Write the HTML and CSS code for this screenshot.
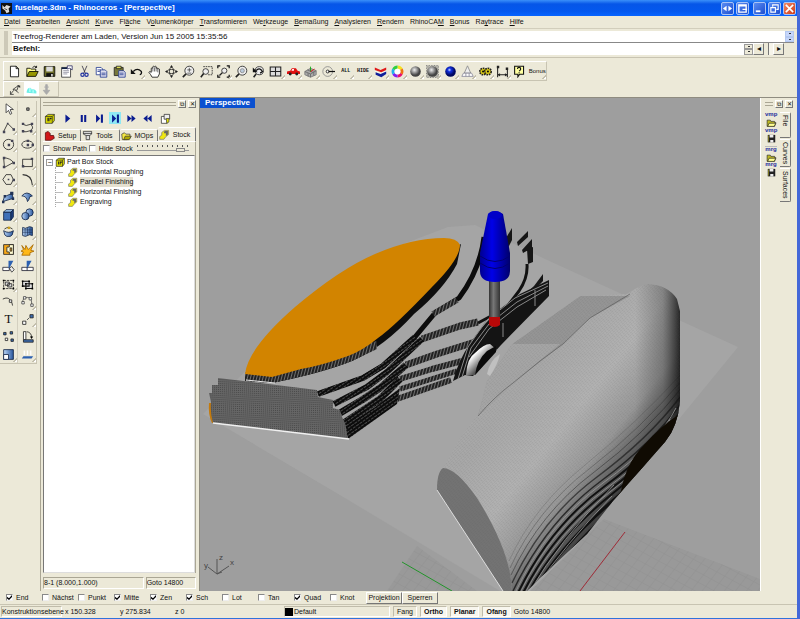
FILE: index.html
```html
<!DOCTYPE html>
<html lang="de">
<head>
    <meta charset="UTF-8">
    <meta name="viewport" content="width=device-width, initial-scale=1.0">
    <title>fuselage.3dm - Rhinoceros - [Perspective]</title>
    <link rel="stylesheet" href="styles.css">
</head>
<body>
<!-- icon set -->
<svg class="defs" aria-hidden="true">
    <defs>
        <radialGradient id="gball" cx="40%" cy="35%"><stop offset="0" stop-color="#eee"/><stop offset=".5" stop-color="#999"/><stop offset="1" stop-color="#444"/></radialGradient>
        <radialGradient id="bball" cx="40%" cy="35%"><stop offset="0" stop-color="#cdf"/><stop offset=".35" stop-color="#1230e0"/><stop offset="1" stop-color="#000860"/></radialGradient>
        <linearGradient id="bl"><stop offset="0" stop-color="#bcd8f8"/><stop offset="1" stop-color="#28559c"/></linearGradient>
        <pattern id="check" width="2" height="2" patternUnits="userSpaceOnUse"><path d="M0 0h1v1H0zM1 1h1v1H1z" fill="#777"/></pattern>
    </defs>
    <symbol id="i-new" viewBox="0 0 16 16"><path d="M3 1.500h7l3 3v10H3zM10 1.500v3h3" fill="#fff" stroke="#000"/></symbol>
    <symbol id="i-open" viewBox="0 0 16 16"><path d="M1 14V4h4l1 1h6v3" fill="#ffff90" stroke="#000"/><path d="M1 14l3-6h11l-3 6z" fill="#969600" stroke="#000"/><path d="M8 3q3-3 5 0v-2m0 2h-2" fill="none" stroke="#000"/></symbol>
    <symbol id="i-save" viewBox="0 0 16 16"><path d="M1.500 2h13v12h-13z" fill="#6d6d28" stroke="#000"/><path d="M4 2h8v6H4z" fill="#ddd"/><path d="M4 10h9v4H4z" fill="#111"/><path d="M10 11h2v3h-2z" fill="#ddd"/></symbol>
    <symbol id="i-props" viewBox="0 0 16 16"><path d="M2 3h11v12H2z" fill="#fff" stroke="#333"/><path d="M2 3h7v2H2z" fill="#124"/><path d="M4 7h7M4 9h7M4 11h5" stroke="#889"/><path d="M9 1h6v5l-3-2-3 1z" fill="#fff" stroke="#336"/></symbol>
    <symbol id="i-cut" viewBox="0 0 16 16"><path d="M5 1l4 9M11 1L7 10" stroke="#334" fill="none"/><circle cx="5.500" cy="12" r="2" fill="none" stroke="#2233a0" stroke-width="1.500"/><circle cx="10.500" cy="12" r="2" fill="none" stroke="#2233a0" stroke-width="1.500"/></symbol>
    <symbol id="i-copy" viewBox="0 0 16 16"><path d="M1.500 3h6l2 2v7h-8z" fill="#fff" stroke="#223a90"/><path d="M6.500 6h6l2 2v7h-8z" fill="#dde" stroke="#223a90"/><path d="M3 6h4M3 8h3M8 10h5M8 12h5" stroke="#223a90"/></symbol>
    <symbol id="i-paste" viewBox="0 0 16 16"><path d="M1.500 3h11v10h-11z" fill="#77773a" stroke="#222"/><path d="M4 1.500h6v3H4z" fill="#dd5" stroke="#222"/><path d="M7 7h6l2 2v6H7z" fill="#dde" stroke="#223a90"/><path d="M8 10h5M8 12h5" stroke="#223a90"/></symbol>
    <symbol id="i-undo" viewBox="0 0 16 16"><path d="M4 8q5-5 10 0 1 3-2 4" fill="none" stroke="#111" stroke-width="1.500"/><path d="M1 5v6h6z" fill="#111"/></symbol>
    <symbol id="i-pan" viewBox="0 0 16 16"><path d="M5 15Q3 11 1 9q1-2 3 0V4q1-1 2 0V2q1-1 2 0v0q1-1 2 0v2q1-1 2 0v1q1-1 2 0v6l-2 4z" fill="#fff" stroke="#111"/><path d="M6 4v4M8 3v5M10 3v5M12 5v4" stroke="#333" stroke-width=".8"/></symbol>
    <symbol id="i-rotv" viewBox="0 0 16 16"><ellipse cx="8" cy="8" rx="5" ry="2.500" fill="none" stroke="#222"/><ellipse cx="8" cy="8" rx="2.500" ry="5" fill="none" stroke="#222"/><path d="M8 0l2 3H6zM8 16l2-3H6zM0 8l3-2v4zM16 8l-3-2v4z" fill="#222"/></symbol>
    <symbol id="i-zoom" viewBox="0 0 16 16"><circle cx="9" cy="7" r="5.500" fill="#eee" stroke="#222"/><path d="M5 11l-4 4" stroke="#222" stroke-width="2"/><path d="M6.500 6h5M9 3.500v5M6.500 10h5" stroke="#222" stroke-width=".8"/></symbol>
    <symbol id="i-zoomw" viewBox="0 0 16 16"><path d="M4 2h11v10H9" fill="none" stroke="#222" stroke-dasharray="2 1"/><circle cx="7" cy="8" r="3.500" fill="#eee" stroke="#222"/><path d="M4.500 10.500L1 15" stroke="#222" stroke-width="2"/></symbol>
    <symbol id="i-zoome" viewBox="0 0 16 16"><path d="M1 4V1h3M12 1h3v3M15 12v3h-3M4 15H1v-3" fill="none" stroke="#111" stroke-width="1.500"/><circle cx="9" cy="7" r="3.200" fill="#eee" stroke="#222"/><path d="M6.500 9.500L3 13" stroke="#222" stroke-width="1.600"/></symbol>
    <symbol id="i-zooms" viewBox="0 0 16 16"><circle cx="9" cy="7" r="5.500" fill="#eee" stroke="#222"/><path d="M5 11l-4 4" stroke="#222" stroke-width="2"/><circle cx="9" cy="7" r="2.500" fill="#bcd" stroke="#888"/></symbol>
    <symbol id="i-zoomu" viewBox="0 0 16 16"><circle cx="9" cy="7" r="5" fill="#eee" stroke="#222"/><path d="M5 11l-3 4" stroke="#222" stroke-width="2"/><path d="M5 7q4-5 8 1l-3 2" fill="none" stroke="#111" stroke-width="1.500"/><path d="M1 3v6h6z" fill="#111"/></symbol>
    <symbol id="i-four" viewBox="0 0 16 16"><path d="M1.500 2.500h13v11h-13zM8 2.500v11M1.500 8h13" fill="#ddd" stroke="#222" stroke-width="1.300"/></symbol>
    <symbol id="i-car" viewBox="0 0 16 16"><path d="M0 11V8l4-1 2-3h5l2 3 3 1v3z" fill="#e01010"/><path d="M6.500 5h2v2H5.500z" fill="#fff"/><circle cx="4" cy="11" r="1.800" fill="#222"/><circle cx="12" cy="11" r="1.800" fill="#222"/></symbol>
    <symbol id="i-cplane" viewBox="0 0 16 16"><path d="M1 8l7-4 7 3v5l-7 3-7-3z" fill="#aaa" stroke="#777"/><path d="M1 8l7 3 7-4M8 11v4M4 6l7 3M5 10v4M12 8v5" stroke="#666" fill="none"/><path d="M8 8V2" stroke="#0a0"/><path d="M8 8l5-3" stroke="#d00"/></symbol>
    <symbol id="i-osnap" viewBox="0 0 16 16"><circle cx="7" cy="8" r="6" fill="none" stroke="#888"/><circle cx="7" cy="8" r="1.800" fill="#fff" stroke="#111"/><path d="M8 8h8" stroke="#111" stroke-width="1.500"/></symbol>
    <symbol id="i-layers" viewBox="0 0 16 16"><path d="M1 3l7 3 7-3v3l-6 3-8-3z" fill="#e01818"/><path d="M1 7l7 3 7-3v1l-6 3-8-3z" fill="#fff"/><path d="M2 9l6 2 7-3v3l-6 4-7-3z" fill="#10209a"/></symbol>
    <symbol id="i-wheel" viewBox="0 0 16 16"><g fill="none" stroke-width="3.500"><path d="M8 2.500A5.500 5.500 0 0 1 12.800 5.300" stroke="#f5e020"/><path d="M12.800 5.300A5.500 5.500 0 0 1 12.800 10.700" stroke="#f07010"/><path d="M12.800 10.700A5.500 5.500 0 0 1 8 13.500" stroke="#e81070"/><path d="M8 13.500A5.500 5.500 0 0 1 3.200 10.700" stroke="#8020f0"/><path d="M3.200 10.700A5.500 5.500 0 0 1 3.200 5.300" stroke="#20b0f0"/><path d="M3.200 5.300A5.500 5.500 0 0 1 8 2.500" stroke="#30d040"/></g><circle cx="8" cy="8" r="3.500" fill="#fff"/></symbol>
    <symbol id="i-gray" viewBox="0 0 16 16"><circle cx="8" cy="8" r="6.500" fill="url(#gball)"/></symbol>
    <symbol id="i-grayc" viewBox="0 0 16 16"><path d="M0 0h16v16H0z" fill="url(#check)"/><circle cx="8" cy="8" r="6.500" fill="url(#gball)"/></symbol>
    <symbol id="i-blue" viewBox="0 0 16 16"><circle cx="8" cy="8" r="6.500" fill="url(#bball)"/></symbol>
    <symbol id="i-cone" viewBox="0 0 16 16"><path d="M8 1l4 9H4z" fill="#eee" stroke="#888"/><path d="M3 10h10l2 4H1z" fill="#fff" stroke="#889"/><path d="M6 10v4M10 10v4" stroke="#889"/></symbol>
    <symbol id="i-gears" viewBox="0 0 16 16"><circle cx="5" cy="8" r="4" fill="#d8c818" stroke="#222" stroke-width="2" stroke-dasharray="2 1"/><circle cx="11" cy="8" r="4" fill="#d8c818" stroke="#222" stroke-width="2" stroke-dasharray="2 1"/><circle cx="5" cy="8" r="1.200"/><circle cx="11" cy="8" r="1.200"/></symbol>
    <symbol id="i-dim" viewBox="0 0 16 16"><path d="M2 3v12M14 6v9M2 12h12" stroke="#222" stroke-width="1.300"/><path d="M1 1h3v3H1zM12 3h3v3h-3z" fill="#222"/><path d="M2 12l3-2v4zM14 12l-3-2v4z" fill="#222"/></symbol>
    <symbol id="i-help" viewBox="0 0 16 16"><path d="M2 1.500h11v10H8l-2 3v-3H2z" fill="#ffffa0" stroke="#111" stroke-width="1.300"/><path d="M5.500 5q0-2 2-2t2 2q0 1-2 2.500M7.500 9v1.300" fill="none" stroke="#111" stroke-width="1.400"/></symbol>
    <symbol id="i-pick" viewBox="0 0 16 16"><path d="M3 14l4-5M3 14v-4M3 14h4M6 8l7-5-2 6zM9 9l4 3" fill="none" stroke="#333"/><path d="M11 3h4v3z" fill="#333"/></symbol>
    <symbol id="i-teal" viewBox="0 0 16 16"><path d="M2 12q0-5 3-6 3-1 3 2 4-1 6 2v3z" fill="#6ff0e8"/><path d="M6 6v5M10 9v3" stroke="#bff" stroke-width="1.500"/></symbol>
    <symbol id="i-drill" viewBox="0 0 16 16"><path d="M7 2h2v7h3l-4 5-4-5h3zM5 5h6" fill="#aaa" stroke="#aaa"/></symbol>
    <!-- side tools -->
    <symbol id="t-arrow" viewBox="0 0 16 16"><path d="M5 1v11l3-3 2 5 2-1-2-5h4z" fill="#fff" stroke="#333"/></symbol>
    <symbol id="t-point" viewBox="0 0 16 16"><path d="M7 6h3v3H7z" fill="#999" stroke="#222"/></symbol>
    <symbol id="t-poly" viewBox="0 0 16 16"><path d="M2 13L7 3l7 7" fill="none" stroke="#222"/><path d="M1 12h3v3H1zM6 2h2v2H6zM13 9h3v3h-3z" fill="#445"/></symbol>
    <symbol id="t-curve" viewBox="0 0 16 16"><path d="M2 4q4 3 10 0 5 5-1 8-5 2-9 1" fill="none" stroke="#222"/><path d="M1 2h3v3H1zM12 2h3v3h-3zM1 11h3v3H1zM11 11h3v3h-3z" fill="#445"/></symbol>
    <symbol id="t-circle" viewBox="0 0 16 16"><circle cx="8" cy="8" r="6.300" fill="none" stroke="#222"/><path d="M7 7h3v3H7zM11 2h3v3h-3z" fill="#445"/></symbol>
    <symbol id="t-ellipse" viewBox="0 0 16 16"><ellipse cx="8" cy="8" rx="7" ry="4.500" fill="none" stroke="#222"/><path d="M7 7h3v3H7zM7 2h3v3H7zM13 7h3v3h-3z" fill="#445"/></symbol>
    <symbol id="t-arc" viewBox="0 0 16 16"><path d="M2 2q9 1 12 6L3 14z" fill="none" stroke="#222"/><path d="M1 1h3v3H1zM13 7h3v3h-3zM1 12h3v3H1z" fill="#445"/></symbol>
    <symbol id="t-rect" viewBox="0 0 16 16"><path d="M2 4h12v9H2z" fill="none" stroke="#222"/><path d="M1 11h3v3H1zM12 2h3v3h-3z" fill="#445"/></symbol>
    <symbol id="t-hex" viewBox="0 0 16 16"><path d="M1 8l4-6h6l3 6-3 6H5z" fill="none" stroke="#222"/><path d="M7 7h2v2H7zM13 7h3v3h-3z" fill="#445"/></symbol>
    <symbol id="t-fillet" viewBox="0 0 16 16"><path d="M2 2q11 0 12 13" fill="none" stroke="#333" stroke-width="1.300"/></symbol>
    <symbol id="t-srf" viewBox="0 0 16 16"><path d="M1 13l2-6 9-4 2 6z" fill="url(#bl)" stroke="#124"/><path d="M10 1h4v4h-4zM0 12h3v3H0zM2 5h3v3H2zM12 8h3v3h-3z" fill="#235"/></symbol>
    <symbol id="t-srf2" viewBox="0 0 16 16"><path d="M1 6q6-7 13 0l-3 1q-1 4-3 6-1-7-7-7z" fill="url(#bl)" stroke="#124"/></symbol>
    <symbol id="t-box" viewBox="0 0 16 16"><path d="M2 5h9v10H2z" fill="#3f70b8" stroke="#124"/><path d="M2 5l3-3h9l-3 3z" fill="#9cc4f0" stroke="#124"/><path d="M11 5l3-3v9l-3 4z" fill="#1c3f80" stroke="#124"/></symbol>
    <symbol id="t-balls" viewBox="0 0 16 16"><circle cx="10.500" cy="5.500" r="4.500" fill="url(#bl)" stroke="#124"/><circle cx="5.500" cy="10" r="4.500" fill="url(#bl)" stroke="#124"/></symbol>
    <symbol id="t-cyl" viewBox="0 0 16 16"><path d="M2 7q6 4 12 0-1 7-4 7H6Q3 14 2 7z" fill="url(#bl)" stroke="#124"/><path d="M3 5q5-4 10 0" stroke="#222" fill="none"/><path d="M7 2h3v3H7z" fill="#c8a020"/></symbol>
    <symbol id="t-mesh" viewBox="0 0 16 16"><path d="M2 3q4 2 6 0t6 0v10q-4-2-6 0t-6 0z" fill="url(#bl)" stroke="#124"/><path d="M5 4v9M8 3v10M11 3v9M2 6h12M2 9h12" stroke="#124" stroke-width=".6" fill="none"/></symbol>
    <symbol id="t-join" viewBox="0 0 16 16"><path d="M2 2h12v12H2z" fill="#f8a818" stroke="#222"/><path d="M9 2h5v12H9v-3H6V5h3z" fill="#fffbd0" stroke="#222"/><path d="M10 6h2v4h-2z" fill="#f8a818" stroke="#222"/></symbol>
    <symbol id="t-burst" viewBox="0 0 16 16"><path d="M1 3l4 5 1-5 3 5 6-6-3 7 4 1-5 2v3H1l2-4-3-1 3-2z" fill="#ffb818" stroke="#a56800"/></symbol>
    <symbol id="t-trim" viewBox="0 0 16 16"><path d="M1 9h8v4H1z" fill="#fff" stroke="#223"/><path d="M8 1h6l-5 9H8z" fill="#2c60b0"/><path d="M9 10l3-2 3 4-3 3z" fill="#eee" stroke="#333"/></symbol>
    <symbol id="t-split" viewBox="0 0 16 16"><path d="M1 9h14v4H1z" fill="#fff" stroke="#223"/><path d="M7 1h6L8 10H7z" fill="#2c60b0"/><path d="M7 9h1v4H7z" fill="#223"/></symbol>
    <symbol id="t-group" viewBox="0 0 16 16"><path d="M2 3h12v10H2z" fill="none" stroke="#222" stroke-dasharray="3 1"/><path d="M4 5h5v4H4zM7 7h5v4H7z" fill="#ddd" stroke="#222"/><path d="M1 2h2v2H1zM13 2h2v2h-2zM1 12h2v2H1zM13 12h2v2h-2z"/></symbol>
    <symbol id="t-ungroup" viewBox="0 0 16 16"><path d="M2 4h8v6H2zM6 7h8v6H6z" fill="#ddd" stroke="#111" stroke-width="1.300"/><path d="M1 3h2v2H1zM9 3h2v2H9zM1 9h2v2H1zM13 6h2v2h-2zM13 12h2v2h-2zM5 12h2v2H5zM5 6h2v2H5z"/></symbol>
    <symbol id="t-cpt" viewBox="0 0 16 16"><path d="M1 5q6-3 9 1t3 7" fill="none" stroke="#222"/><path d="M9 6h3v3H9z" fill="#fff" stroke="#222"/></symbol>
    <symbol id="t-edit" viewBox="0 0 16 16"><path d="M2 9q0-6 6-6t5 10" fill="none" stroke="#555"/><path d="M1 8h3v3H1zM3 2h3v3H3zM10 3h3v3h-3zM12 11h3v3h-3z" fill="#fff" stroke="#444"/></symbol>
    <symbol id="t-pts" viewBox="0 0 16 16"><path d="M4 12l9-9" stroke="#222" stroke-dasharray="3 2"/><path d="M2 10h4v4H2z" fill="#fff" stroke="#222"/><path d="M11 2h4v4h-4z" fill="#3c6cb0" stroke="#222"/></symbol>
    <symbol id="t-array" viewBox="0 0 16 16"><path d="M2 3h3v3H2zM10 2h3v3h-3zM11 11h3v3h-3z" fill="#3c6cb0" stroke="#222"/><path d="M4 10h3v3H4z" fill="#fff" stroke="#222"/></symbol>
    <symbol id="t-rot" viewBox="0 0 16 16"><path d="M3 2h3v10H3z" fill="#fff" stroke="#222"/><path d="M7 2q6 1 6 7" fill="none" stroke="#222"/><path d="M3 12h12v3H3z" fill="#3c6cb0" stroke="#222"/><path d="M11 8h4l-2 3z"/></symbol>
    <symbol id="t-scale" viewBox="0 0 16 16"><path d="M2 2h12v12H2z" fill="url(#bl)" stroke="#124"/><path d="M2 8h6v6H2z" fill="#fff" stroke="#124"/></symbol>
    <symbol id="t-proj" viewBox="0 0 16 16"><path d="M1 13l2-3h12l-2 3z" fill="#2c60b0"/><path d="M4 3v6M8 3v6M12 3v6" stroke="#fff" stroke-width="1.500"/></symbol>
    <!-- cam panel -->
    <symbol id="c-stock" viewBox="0 0 16 16"><path d="M2 5l4-3h9v9l-3 4H2z" fill="#d8d800" stroke="#222"/><path d="M2 5h10v10M12 5l3-3" fill="none" stroke="#222"/><path d="M5 7h2v5H5zM8 7h3v2H9v3H8z" fill="#222"/></symbol>
    <symbol id="c-play" viewBox="0 0 16 16"><path d="M5 2l7 6-7 6z" fill="#0a1c90"/></symbol>
    <symbol id="c-pause" viewBox="0 0 16 16"><path d="M4 3h3v10H4zM9 3h3v10H9z" fill="#0a1c90"/></symbol>
    <symbol id="c-step" viewBox="0 0 16 16"><path d="M3 2l6 6-6 6zM10 2h3v12h-3z" fill="#0a1c90"/></symbol>
    <symbol id="c-ff" viewBox="0 0 16 16"><path d="M2 3l6 5-6 5zM8 3l6 5-6 5z" fill="#0a1c90"/></symbol>
    <symbol id="c-rw" viewBox="0 0 16 16"><path d="M8 3L2 8l6 5zM14 3L8 8l6 5z" fill="#0a1c90"/></symbol>
    <symbol id="c-list" viewBox="0 0 16 16"><path d="M2 5h8v10H2z" fill="#fff" stroke="#222"/><path d="M6 2h8v7H6z" fill="#eee" stroke="#222"/><path d="M9 8h4v5l-3 2z" fill="#e0e000" stroke="#444"/></symbol>
    <symbol id="c-red" viewBox="0 0 16 16"><path d="M2 4l4-2 3 3v3h5l1 4-5 3H2z" fill="#d01818" stroke="#400"/></symbol>
    <symbol id="c-tool" viewBox="0 0 16 16"><path d="M2 2h12v4l-3 2v6H6V8L2 6zM2 5h12M6 8h5" fill="#ddd" stroke="#222"/></symbol>
    <symbol id="c-mop" viewBox="0 0 16 16"><path d="M1 6l4-2 2 2h6v6l-4 2H2z" fill="#f4e840" stroke="#333"/><path d="M4 14l2-5h9l-3 5z" fill="#b0a800" stroke="#333"/></symbol>
    <symbol id="c-cut" viewBox="0 0 16 16"><path d="M1 11l3-2V5l4-3h6v6l-4 3-3 4H1z" fill="#f0e810" stroke="#776"/><path d="M8 3h5v5l-3 2V6H7z" fill="#666"/></symbol>
    <symbol id="c-file" viewBox="0 0 16 16"><path d="M1 15V5h5l1 2h6v2h2l-2 6z" fill="#bdb820" stroke="#222"/><path d="M4 10h11l-3 5H2z" fill="#ffff90" stroke="#222"/></symbol>
    <symbol id="c-disk" viewBox="0 0 16 16"><path d="M2 3h12v12H2z" fill="#222"/><path d="M5 3h6v4H5zM6 11h5v4H6z" fill="#eee"/><path d="M3 4h1v10H3z" fill="#aaa020"/></symbol>
</svg>

<div class="window">
    <header class="title">
        <svg class="logo" viewBox="0 0 16 16"><path d="M0 0h16v16H0z" fill="#111"/><path d="M2 3l3 3 3-3 6 2-3 3 1 5-4 2-2-4-4-3z" fill="#ddd"/><path d="M5 8l4 2" stroke="#111"/></svg>
        <h1>fuselage.3dm - Rhinoceros - [Perspective]</h1>
        <div class="caption">
            <button aria-label="Bildschirm"><svg viewBox="0 0 12 12"><path d="M1 6l4-3v6zM11 6L7 3v6z" fill="#fff"/></svg></button>
            <button aria-label="Fenster" class="apart"><svg viewBox="0 0 12 12"><path d="M2 2h8v8H2zM2 3h8M6 7h5" fill="none" stroke="#fff" stroke-width="1.500"/></svg></button>
            <button aria-label="Minimieren"><svg viewBox="0 0 12 12"><path d="M2 9h5" stroke="#fff" stroke-width="2"/></svg></button>
            <button aria-label="Wiederherstellen"><svg viewBox="0 0 12 12"><path d="M4 4V2h6v5H8M2 5h5v5H2z" fill="none" stroke="#fff" stroke-width="1.200"/></svg></button>
            <button aria-label="Beenden" class="close"><svg viewBox="0 0 12 12"><path d="M2 2l8 8M10 2l-8 8" stroke="#fff" stroke-width="1.800"/></svg></button>
        </div>
    </header>

    <nav class="menu">
        <a href="#"><u>D</u>atei</a><a href="#"><u>B</u>earbeiten</a><a href="#"><u>A</u>nsicht</a><a href="#"><u>K</u>urve</a><a href="#">Fl<u>ä</u>che</a><a href="#">V<u>o</u>lumenkörper</a><a href="#"><u>T</u>ransformieren</a><a href="#">We<u>r</u>kzeuge</a><a href="#"><u>B</u>emaßung</a><a href="#"><u>A</u>nalysieren</a><a href="#"><u>R</u>endern</a><a href="#">RhinoCA<u>M</u></a><a href="#"><u>B</u>onus</a><a href="#">Ra<u>y</u>trace</a><a href="#"><u>H</u>ilfe</a>
    </nav>

    <section class="command">
        <div class="cmdbody">
            <div class="history"><span>Treefrog-Renderer am Laden, Version Jun 15 2005 15:35:56</span>
                <span class="spin blue"><button aria-label="auf"></button><button aria-label="ab"></button></span>
            </div>
            <div class="prompt">
                <label for="cmd">Befehl:</label><input id="cmd" type="text">
                <span class="spin"><button aria-label="auf"></button><button aria-label="ab"></button></span>
                <span class="hscroll"><button aria-label="links">◂</button><i></i><button aria-label="rechts">▸</button></span>
            </div>
        </div>
    </section>

    <div class="toolbar">
        <button aria-label="Neu"><svg><use href="#i-new"/></svg></button>
        <button aria-label="Öffnen"><svg><use href="#i-open"/></svg></button>
        <button aria-label="Speichern"><svg><use href="#i-save"/></svg></button>
        <button aria-label="Eigenschaften"><svg><use href="#i-props"/></svg></button>
        <button aria-label="Ausschneiden"><svg><use href="#i-cut"/></svg></button>
        <button aria-label="Kopieren"><svg><use href="#i-copy"/></svg></button>
        <button aria-label="Einfügen"><svg><use href="#i-paste"/></svg></button>
        <button aria-label="Rückgängig" class="fly"><svg><use href="#i-undo"/></svg></button>
        <button aria-label="Verschieben"><svg><use href="#i-pan"/></svg></button>
        <button aria-label="Ansicht drehen"><svg><use href="#i-rotv"/></svg></button>
        <button aria-label="Zoom"><svg><use href="#i-zoom"/></svg></button>
        <button aria-label="Zoom Fenster"><svg><use href="#i-zoomw"/></svg></button>
        <button aria-label="Zoom Grenzen" class="fly"><svg><use href="#i-zoome"/></svg></button>
        <button aria-label="Zoom Auswahl"><svg><use href="#i-zooms"/></svg></button>
        <button aria-label="Zoom zurück"><svg><use href="#i-zoomu"/></svg></button>
        <button aria-label="Vier Ansichten" class="fly"><svg><use href="#i-four"/></svg></button>
        <button aria-label="Ansicht" class="fly"><svg><use href="#i-car"/></svg></button>
        <button aria-label="Konstruktionsebene" class="fly"><svg><use href="#i-cplane"/></svg></button>
        <button aria-label="Objektfang" class="fly"><svg><use href="#i-osnap"/></svg></button>
        <button class="word fly">ALL</button>
        <button class="word fly">HIDE</button>
        <button aria-label="Ebenen" class="fly"><svg><use href="#i-layers"/></svg></button>
        <button aria-label="Farbe" class="fly"><svg><use href="#i-wheel"/></svg></button>
        <button aria-label="Schattieren" class="fly"><svg><use href="#i-gray"/></svg></button>
        <button aria-label="Schattieren Auswahl" class="fly"><svg><use href="#i-grayc"/></svg></button>
        <button aria-label="Rendern" class="fly"><svg><use href="#i-blue"/></svg></button>
        <button aria-label="Licht" class="fly"><svg><use href="#i-cone"/></svg></button>
        <button aria-label="Optionen" class="fly"><svg><use href="#i-gears"/></svg></button>
        <button aria-label="Bemaßung" class="fly"><svg><use href="#i-dim"/></svg></button>
        <button aria-label="Hilfe"><svg><use href="#i-help"/></svg></button>
        <button class="bonus fly">Bonus</button>
    </div>
    <div class="toolbar second">
        <button aria-label="Auswahl"><svg><use href="#i-pick"/></svg></button>
        <button aria-label="Simulation" class="on"><svg><use href="#i-teal"/></svg></button>
        <button aria-label="Bohren"><svg><use href="#i-drill"/></svg></button>
    </div>

    <main class="work">
        <div class="tools">
            <button aria-label="Auswählen"><svg><use href="#t-arrow"/></svg></button><button aria-label="Punkt" class="fly"><svg><use href="#t-point"/></svg></button>
            <button aria-label="Polylinie" class="fly"><svg><use href="#t-poly"/></svg></button><button aria-label="Kurve" class="fly"><svg><use href="#t-curve"/></svg></button>
            <button aria-label="Kreis" class="fly"><svg><use href="#t-circle"/></svg></button><button aria-label="Ellipse" class="fly"><svg><use href="#t-ellipse"/></svg></button>
            <button aria-label="Bogen" class="fly"><svg><use href="#t-arc"/></svg></button><button aria-label="Rechteck" class="fly"><svg><use href="#t-rect"/></svg></button>
            <button aria-label="Polygon" class="fly"><svg><use href="#t-hex"/></svg></button><button aria-label="Verrunden" class="fly"><svg><use href="#t-fillet"/></svg></button>
            <button aria-label="Fläche" class="fly"><svg><use href="#t-srf"/></svg></button><button aria-label="Fläche biegen" class="fly"><svg><use href="#t-srf2"/></svg></button>
            <button aria-label="Quader" class="fly"><svg><use href="#t-box"/></svg></button><button aria-label="Vereinigen" class="fly"><svg><use href="#t-balls"/></svg></button>
            <button aria-label="Projizieren" class="fly"><svg><use href="#t-cyl"/></svg></button><button aria-label="Netz" class="fly"><svg><use href="#t-mesh"/></svg></button>
            <button aria-label="Verbinden"><svg><use href="#t-join"/></svg></button><button aria-label="Zerlegen"><svg><use href="#t-burst"/></svg></button>
            <button aria-label="Trimmen"><svg><use href="#t-trim"/></svg></button><button aria-label="Teilen"><svg><use href="#t-split"/></svg></button>
            <button aria-label="Gruppieren" class="fly"><svg><use href="#t-group"/></svg></button><button aria-label="Gruppe lösen"><svg><use href="#t-ungroup"/></svg></button>
            <button aria-label="Punkte an"><svg><use href="#t-cpt"/></svg></button><button aria-label="Punkte bearbeiten" class="fly"><svg><use href="#t-edit"/></svg></button>
            <button class="text">T</button><button aria-label="Bewegen" class="fly"><svg><use href="#t-pts"/></svg></button>
            <button aria-label="Anordnen"><svg><use href="#t-array"/></svg></button><button aria-label="Drehen"><svg><use href="#t-rot"/></svg></button>
            <button aria-label="Skalieren" class="fly"><svg><use href="#t-scale"/></svg></button><button aria-label="Ausrichten" class="fly"><svg><use href="#t-proj"/></svg></button>
        </div>

        <aside class="cam">
            <div class="grip"><i></i><button aria-label="Andocken">⧉</button><button aria-label="Schließen">✕</button></div>
            <div class="player">
                <button aria-label="Material"><svg><use href="#c-stock"/></svg></button>
                <button aria-label="Start"><svg><use href="#c-play"/></svg></button>
                <button aria-label="Pause"><svg><use href="#c-pause"/></svg></button>
                <button aria-label="Schritt"><svg><use href="#c-step"/></svg></button>
                <button aria-label="Bis Ende" class="on"><svg><use href="#c-step"/></svg></button>
                <button aria-label="Vorlauf"><svg><use href="#c-ff"/></svg></button>
                <button aria-label="Rücklauf"><svg><use href="#c-rw"/></svg></button>
                <button aria-label="Liste"><svg><use href="#c-list"/></svg></button>
            </div>
            <div class="tabs" role="tablist">
                <button role="tab"><svg><use href="#c-red"/></svg>Setup</button>
                <button role="tab"><svg><use href="#c-tool"/></svg>Tools</button>
                <button role="tab"><svg><use href="#c-mop"/></svg>MOps</button>
                <button role="tab" aria-selected="true" class="active"><svg><use href="#c-cut"/></svg>Stock</button>
            </div>
            <div class="page">
                <div class="show">
                    <label><input type="checkbox">Show Path</label>
                    <label><input type="checkbox">Hide Stock</label>
                    <input type="range" aria-label="Geschwindigkeit" min="0" max="10" value="9">
                </div>
                <ul class="tree">
                    <li class="root"><i>−</i><svg><use href="#c-stock"/></svg><span>Part Box Stock</span></li>
                    <li><svg><use href="#c-cut"/></svg><span>Horizontal Roughing</span></li>
                    <li><svg><use href="#c-cut"/></svg><span class="sel">Parallel Finishing</span></li>
                    <li><svg><use href="#c-cut"/></svg><span>Horizontal Finishing</span></li>
                    <li><svg><use href="#c-cut"/></svg><span>Engraving</span></li>
                </ul>
            </div>
            <div class="camstatus"><span>8-1 (8.000,1.000)</span><span>Goto 14800</span></div>
        </aside>

        <section class="view">
            <h2>Perspective</h2>
            <svg viewBox="200 97 560 493" preserveAspectRatio="xMidYMid slice">
                <defs>
                    <pattern id="hatch" width="3" height="3" patternUnits="userSpaceOnUse" patternTransform="rotate(15)"><path d="M0 0h3v3H0z" fill="#222"/><path d="M0 0h1v3H0z" fill="#707070"/></pattern>
                    <pattern id="dark" width="4" height="3" patternUnits="userSpaceOnUse" patternTransform="rotate(-35)"><path d="M0 0h4v3H0z" fill="#0c0c0c"/><path d="M0 0h3v1H0z" fill="#484848"/></pattern>
                    <pattern id="front" width="2" height="2" patternUnits="userSpaceOnUse" patternTransform="rotate(3)"><path d="M0 0h2v2H0z" fill="#666"/><path d="M0 0h1v1H0z" fill="#484848"/></pattern>
                    <pattern id="grain" width="3" height="2" patternUnits="userSpaceOnUse" patternTransform="rotate(-42)"><path d="M0 0h2v1H0z" fill="#555" opacity=".12"/></pattern>
                    <pattern id="grid" width="9" height="9" patternUnits="userSpaceOnUse" patternTransform="matrix(.87 .47 -.62 .8 625 531)"><path d="M0 0h9M0 0v9" stroke="#8c8c8c" fill="none"/></pattern>
                    <linearGradient id="body" gradientUnits="userSpaceOnUse" x1="520" y1="390" x2="645" y2="490"><stop offset="0" stop-color="#a8a8a8"/><stop offset=".35" stop-color="#b2b2b2"/><stop offset=".62" stop-color="#989898"/><stop offset=".86" stop-color="#444"/><stop offset="1" stop-color="#0a0a0a"/></linearGradient>
                    <linearGradient id="edge" gradientUnits="userSpaceOnUse" x1="635" y1="0" x2="681" y2="0"><stop offset="0" stop-color="#444" stop-opacity="0"/><stop offset=".6" stop-color="#444" stop-opacity=".4"/><stop offset="1" stop-color="#111" stop-opacity=".9"/></linearGradient>
                    <linearGradient id="cone"><stop offset="0" stop-color="#000090"/><stop offset=".4" stop-color="#0000e8"/><stop offset="1" stop-color="#00006c"/></linearGradient>
                    <linearGradient id="shank"><stop offset="0" stop-color="#333"/><stop offset=".4" stop-color="#777"/><stop offset="1" stop-color="#333"/></linearGradient>
                    <linearGradient id="chrome" x1="0" y1="0" x2="1" y2="1"><stop offset="0" stop-color="#777"/><stop offset=".3" stop-color="#fff"/><stop offset=".6" stop-color="#555"/><stop offset="1" stop-color="#111"/></linearGradient>
                    <clipPath id="hull"><path d="M443 467L460 437 478 413 487 380 512 343 580 295 627 293Q640 284 648 283 668 284 677 298L680 310V400Q678 425 665 441L613 500 587 533 540 577 527 590H512Q510 550 477 497 456 467 443 467z"/></clipPath>
                </defs>
                <path d="M200 97h560v493H200z" fill="#9e9e9e"/>
                <!-- stock plane -->
                <path d="M203 413L270 345 330 288 390 248 448 226 475 224 545 258 738 346 612 500 540 590H500L350 500z" fill="#a5a5a5"/>
                <path d="M417 545l60 45h-90zM604 518l156 60v12H530z" fill="#999"/>
                <path d="M417 545l60 45h-90zM604 518l156 60v12H530z" fill="url(#grid)" opacity=".6"/>
                <path d="M402 561l50 29" stroke="#22942a"/>
                <path d="M625 531l-45 59" stroke="#a02c38"/>

                <!-- roughing steps -->
                <g fill="none" stroke-linejoin="round">
                    <path d="M484 236q-4 33-25 61l-24 15-20 24-32 29-20 12-45 16" stroke="#0c0c0c" stroke-width="5"/>
                    <path d="M415 336l-32 29-20 12-45 16" stroke="url(#dark)" stroke-width="6"/>
                    <path d="M457 299l-24 14" stroke="url(#hatch)" stroke-width="6"/>
                    <path d="M527 263q1 14-8 27l-13 17-28 15" stroke="#111" stroke-width="3"/>
                    <path d="M478 321l-18 4-38 13" stroke="url(#hatch)" stroke-width="7"/>
                    <path d="M422 338l-35 33-20 15-33 17" stroke="url(#dark)" stroke-width="6"/>
                    <path d="M475 341l-38 12-31 11" stroke="url(#hatch)" stroke-width="7"/>
                    <path d="M406 364l-26 23-18 12-22 13" stroke="url(#dark)" stroke-width="7"/>
                    <path d="M462 360l-30 8-32 10" stroke="url(#hatch)" stroke-width="6"/>
                    <path d="M400 378l-20 20-36 24" stroke="url(#dark)" stroke-width="7"/>
                    <path d="M457 370l-57 18" stroke="url(#hatch)" stroke-width="5"/>
                    <path d="M451 379l-54 19" stroke="url(#hatch)" stroke-width="6"/>
                </g>
                <path d="M400 387l-3 16-49 35-3-13 30-19z" fill="url(#dark)"/>
                <path d="M512 227v12l-6 12v-14zM528 230v6l-10 9-1-4zM532 238v9l-9 5-1-3zM527 248l6-2v15l-5 2zM543 273v7l-15 16-8 2 14-13z" fill="#161616"/>
                <path d="M549 279v16l-48 49-28 31-8-1-12 6q5-20 18-39 14-20 29-33l20-15z" fill="#141414"/>
                <path d="M548 282l-33 15-29 23-18 26-10 32M548 285l-31 16-28 22-18 24-9 29M546 289l-29 17-28 22-20 28M535 289v16M503 322v14" fill="none" stroke="#888"/>
                <path d="M466 374q1-17 9-22 9-9 15-9l7 6-22 25z" fill="url(#chrome)"/>
                <path d="M475 374q2-15 12-24l9-5v6z" fill="#0b0b0b"/>

                <!-- top contour -->
                <path d="M245 372v8l27 2q50-10 80-22 32-14 62-47 30-25 43-50l4-20z" fill="#0e0e0e"/>
                <path d="M245 372v8l27 2q50-10 80-22l25-12v-8z" fill="url(#hatch)"/>
                <path d="M245 373Q248 347 295 306 340 268 375 253 412 237 444 237 457 237 460 244 460 258 432 286 395 325 378 337 362 350 348 355 320 365 301 368L272 376z" fill="#d28400"/>
                <path d="M246 379l29 3" stroke="#e6e6e6"/>

                <!-- front wall -->
                <path d="M209 402h3l2 20h-2q-4-8-3-20z" fill="#c47a0c"/>
                <path d="M218 377l99 12 1 7 15 3v8l7 2 2 7 3 6 3 16-135-16q-3-10-2-21l-2-9h3v-8h6z" fill="url(#front)"/>
                <path d="M213 422l136 16" stroke="#f0f0f0" stroke-width="1.500"/>

                <!-- fuselage half -->
                <g clip-path="url(#hull)">
                    <path d="M430 270h260v330H430z" fill="url(#body)"/>
                    <path d="M478 415L487 380 512 343 580 295H630L590 317 563 343 513 382z" fill="#959595"/>
                    <path d="M478 415L487 380 512 343h48L513 382z" fill="#a5a5a5"/>
                    <path d="M430 270h260v330H430z" fill="url(#edge)"/>
                    <path d="M430 270h260v330H430z" fill="url(#grain)"/>
                    <path d="M478 415q17-20 35-33l27-22 23-17 27-26 40-24" fill="none" stroke="#555" opacity=".6"/>
                    <!-- finishing passes -->
                    <g fill="none" stroke="#111">
                        <path d="M509 560Q534 505 585 464T684 370" opacity=".15"/>
                        <path d="M510 567Q537 508 589 468T684 377" opacity=".25"/>
                        <path d="M511 574Q540 512 593 472T684 384" opacity=".4"/>
                        <path d="M512 582Q543 516 597 476T684 391" opacity=".6" stroke-width="1.500"/>
                        <path d="M513 590Q546 521 601 480T684 398" opacity=".75" stroke-width="1.500"/>
                        <path d="M517 594Q549 526 605 485T684 405" stroke-width="2"/>
                        <path d="M522 594Q553 531 609 489T684 412" stroke-width="2"/>
                        <path d="M527 594Q557 537 612 493T684 419" stroke-width="2"/>
                        <path d="M532 594Q561 543 616 497T684 426" stroke-width="3"/>
                        <path d="M538 594Q566 549 620 502T684 433" stroke-width="3"/>
                    </g>
                    <g fill="none" stroke="#999" opacity=".8">
                        <path d="M515 592Q547 523 603 482T676 407"/>
                        <path d="M520 592Q551 528 607 487T670 418"/>
                        <path d="M525 592Q555 534 610 491T660 430"/>
                        <path d="M530 590Q559 540 614 484"/>
                        <path d="M535 588Q563 546 612 495"/>
                    </g>
                    <path d="M678 414Q661 425 644 444 626 462 621 490L600 520 680 450z" fill="#100b03"/>
                </g>
                <path d="M443 467Q437 471 437 489L503 590H512Q511 551 477 497 456 467 443 467z" fill="#737373"/>
                <path d="M443 467Q437 471 437 489L503 590H512Q511 551 477 497 456 467 443 467z" fill="url(#grain)"/>
                <path d="M437 489l66 101" stroke="#ddd"/>
                <path d="M487 373q3-14 13-20-2 10-10 22z" fill="#c0c0c0"/>

                <!-- cutter -->
                <path d="M489 280h11v38h-11z" fill="url(#shank)"/>
                <path d="M489 316h11v8q-5 4-11 0z" fill="#b80808"/>
                <path d="M488 213q7-6 15 0l7 39v18q0 11-15 11t-15-11v-18z" fill="url(#cone)"/>
                <ellipse cx="495" cy="214" rx="7" ry="4" fill="#0000c8"/>
                <path d="M480 255q15 11 30 0M480 262q15 11 30 0" fill="none" stroke="#000070"/>

                <!-- axes -->
                <path d="M217 573v-15M217 573l12-8M217 573l-9-7M217 573l5-2" fill="none" stroke="#555"/>
                <g class="axis"><text x="219" y="559">z</text><text x="230" y="564">x</text><text x="204" y="567">y</text></g>
            </svg>
        </section>

        <aside class="files">
            <div class="grip"><i></i><button aria-label="Andocken">⧉</button><button aria-label="Schließen">✕</button></div>
            <div class="filebody">
                <div class="fileicons">
                    <button><span>vmp</span><svg><use href="#c-file"/></svg></button>
                    <button><span>vmp</span><svg><use href="#c-disk"/></svg></button>
                    <button><span>mrg</span><svg><use href="#c-file"/></svg></button>
                    <button><span>mrg</span><svg><use href="#c-disk"/></svg></button>
                </div>
                <div class="vtabs" role="tablist">
                    <button role="tab" class="active">File</button>
                    <button role="tab">Curves</button>
                    <button role="tab">Surfaces</button>
                </div>
            </div>
        </aside>
    </main>

    <div class="osnap">
        <label><input type="checkbox" checked>End</label>
        <label><input type="checkbox">Nächst</label>
        <label><input type="checkbox">Punkt</label>
        <label><input type="checkbox" checked>Mitte</label>
        <label><input type="checkbox" checked>Zen</label>
        <label><input type="checkbox" checked>Sch</label>
        <label><input type="checkbox">Lot</label>
        <label><input type="checkbox">Tan</label>
        <label><input type="checkbox" checked>Quad</label>
        <label><input type="checkbox">Knot</label>
        <button>Projektion</button>
        <button>Sperren</button>
    </div>

    <footer class="status">
        <span class="cell plane">Konstruktionsebene</span>
        <span class="coord">x 150.328</span>
        <span class="coord">y 275.834</span>
        <span class="coord z">z 0</span>
        <button class="cell layer"><i></i>Default</button>
        <button class="cell">Fang</button>
        <button class="cell set">Ortho</button>
        <button class="cell set">Planar</button>
        <button class="cell set">Ofang</button>
        <span>Goto 14800</span>
    </footer>
</div>
</body>
</html>
```
FILE: styles.css
```css
* {
    box-sizing: border-box;
}

body {
    margin: 0;
    background: #2f72dc;
    font-family: "Liberation Sans", Arial, sans-serif;
    font-size: 7px;
    line-height: 10px;
    color: #111;
}

button {
    margin: 0;
    padding: 0;
    border: 0;
    background: none;
    font: inherit;
    color: inherit;
}

.defs {
    position: absolute;
    width: 0;
    height: 0;
}

.window {
    display: flex;
    flex-direction: column;
    min-height: 100vh;
    background: #ece9d8;
    border-right: 3px solid #4468d8;
    border-bottom: 3px solid #2f72dc;
}

/* title */
.title {
    display: flex;
    align-items: center;
    gap: 3px;
    height: 16px;
    padding: 0 1px;
    background: linear-gradient(#3a90fa, #0656e8 25%, #0458ee 70%, #0864ff);
    color: #fff;
}

.logo {
    width: 11px;
    height: 11px;
}

.title h1 {
    flex: 1;
    margin: 0;
    font-size: 8px;
    font-weight: bold;
    line-height: 12px;
}

.caption {
    display: flex;
    gap: 2px;
}

.caption button {
    width: 13px;
    height: 13px;
    border: 1px solid #a9c3f5;
    border-radius: 2px;
    background: linear-gradient(135deg, #5b8cf2, #1c4ed0);
}

.caption .apart {
    margin-right: 2px;
}

.caption .close {
    background: linear-gradient(135deg, #f08a68, #cf3a14);
}

.caption svg {
    display: block;
    width: 11px;
    height: 11px;
}

.menu {
    display: flex;
    gap: 6px;
    height: 13px;
    padding: 1px 4px;
    border-bottom: 1px solid #d2cebc;
}

.menu a {
    color: #111;
    text-decoration: none;
}

/* command line */
.command {
    padding: 2px 3px 2px 4px;
    border-bottom: 1px solid #c8c4b2;
}

.cmdbody {
    border-left: 4px solid #cdc9b8;
    padding-left: 4px;
}

.history,
.prompt {
    display: flex;
    align-items: center;
    height: 12px;
    padding-left: 1px;
    background: #fff;
    font-size: 8px;
}

.history {
    border-bottom: 1px solid #888;
}

.history > span:first-child {
    flex: 1;
}

.prompt {
    margin-right: 10px;
}

.prompt label {
    font-weight: bold;
}

.prompt input {
    flex: 1;
    height: 10px;
    border: 0;
    padding: 0 2px;
    font: inherit;
    outline: none;
}

.spin {
    display: flex;
    flex-direction: column;
    width: 9px;
    height: 11px;
}

.spin button {
    flex: 1;
    border: 1px solid #999;
    background: #ece9d8;
}

.spin.blue button {
    border-color: #b4c8f0;
    background: #c6d6fa;
}

.spin button::before {
    content: "";
    display: block;
    width: 2px;
    height: 1px;
    margin: auto;
    background: #333;
}

.hscroll {
    display: flex;
    width: 31px;
    height: 12px;
    background: #f6f4ea;
}

.hscroll button {
    width: 11px;
    border: 1px solid #fff;
    border-right-color: #777;
    border-bottom-color: #777;
    background: #ece9d8;
}

.hscroll i {
    width: 5px;
    margin-right: 4px;
    border-right: 1px solid #777;
    background: #ece9d8;
}

/* toolbars */
.toolbar {
    display: grid;
    grid-template-columns: repeat(31, 1fr);
    width: 544px;
    height: 20px;
    margin: 3px 0 0 3px;
    padding-left: 2px;
    border: 1px solid #c8c4b2;
    border-top-color: #fff;
    border-left-color: #fff;
}

.toolbar button,
.tools button {
    position: relative;
    display: flex;
    align-items: center;
    justify-content: center;
}

.toolbar svg,
.tools svg {
    width: 13px;
    height: 13px;
}

.fly::after {
    content: "";
    position: absolute;
    right: 0;
    bottom: 1px;
    width: 4px;
    height: 4px;
    background: linear-gradient(135deg, transparent 50%, #c4c0ae 50%, #c4c0ae 65%, #fff 65%);
}

.toolbar .word {
    font: bold 5px "Liberation Mono", monospace;
}

.toolbar .bonus {
    font-size: 6px;
}

.toolbar.second {
    grid-template-columns: 20px 15px 15px;
    width: 56px;
    height: 16px;
    margin-top: 0;
    padding-left: 0;
}

.toolbar .on {
    background: #fff;
}

/* work area */
.work {
    flex: 1;
    display: flex;
    border-top: 1px solid #8f8c80;
}

.tools {
    display: grid;
    grid-template-columns: 18px 18px;
    grid-template-rows: repeat(15, 1fr);
    width: 37px;
    height: 263px;
    margin-top: 3px;
    border-right: 1px solid #c8c4b2;
    border-bottom: 1px solid #c8c4b2;
}

.tools button:nth-child(odd) {
    border-right: 1px solid #d4d0c0;
}

.tools .text {
    font: 13px "Liberation Serif", serif;
}

.cam {
    display: flex;
    flex-direction: column;
    width: 160px;
    margin-left: 3px;
    padding: 1px 3px 2px 2px;
    border-left: 1px solid #aaa694;
    border-right: 1px solid #8f8c80;
}

.grip {
    display: flex;
    align-items: center;
    gap: 2px;
    height: 10px;
}

.grip i {
    flex: 1;
    height: 4px;
    border-top: 1px solid #aaa694;
    border-bottom: 1px solid #aaa694;
}

.grip button {
    width: 8px;
    height: 8px;
    border: 1px solid #fff;
    border-right-color: #777;
    border-bottom-color: #777;
    font-size: 6px;
    line-height: 6px;
}

.player {
    display: flex;
    gap: 4px;
    height: 18px;
    align-items: center;
}

.player button {
    width: 12px;
    height: 12px;
}

.player button:first-child {
    margin-right: 2px;
}

.player button:last-child {
    margin-left: 2px;
}

.player .on {
    background: #8fe8f4;
}

.player svg {
    display: block;
    width: 11px;
    height: 11px;
    margin: auto;
}

.tabs {
    display: flex;
    align-items: flex-end;
    height: 14px;
}

.tabs button {
    flex: 1;
    display: flex;
    align-items: center;
    gap: 3px;
    height: 12px;
    padding-left: 1px;
    border-top: 1px solid #fff;
    border-right: 1px solid #777;
    border-radius: 2px 2px 0 0;
    white-space: nowrap;
}

.tabs .active {
    height: 14px;
    background: #f0eddf;
}

.tabs svg {
    width: 11px;
    height: 11px;
}

.page {
    flex: 1;
    display: flex;
    flex-direction: column;
    border-top: 1px solid #fff;
    border-right: 1px solid #aaa694;
}

.show {
    display: flex;
    align-items: center;
    gap: 2px;
    height: 13px;
}

.show label,
.osnap label {
    display: flex;
    align-items: center;
    gap: 3px;
    white-space: nowrap;
}

input[type="checkbox"] {
    appearance: none;
    width: 7px;
    height: 7px;
    margin: 0;
    border: 1px solid #888;
    border-right-color: #eee;
    border-bottom-color: #eee;
    background: #fff;
}

input[type="checkbox"]:checked::before {
    content: "";
    display: block;
    width: 5px;
    height: 5px;
    background: #000;
    clip-path: polygon(0 35%, 40% 65%, 100% 0, 100% 40%, 40% 100%, 0 70%);
}

input[type="range"] {
    appearance: none;
    flex: 1;
    min-width: 0;
    height: 8px;
    margin: 0 6px 0 2px;
    background: linear-gradient(#999, #999) 0 5px / 100% 1px no-repeat, repeating-linear-gradient(90deg, #555 0 1px, transparent 1px 5px) 0 0 / 100% 2px no-repeat;
}

input[type="range"]::-webkit-slider-thumb {
    appearance: none;
    width: 9px;
    height: 4px;
    margin-top: 3px;
    border: 1px solid #888;
    background: #ece9d8;
}

.tree {
    flex: 1;
    margin: 0;
    padding: 1px 0 0 2px;
    border: 1px solid #777;
    border-right-color: #ddd;
    border-bottom-color: #ddd;
    background: #fff;
    list-style: none;
}

.tree li {
    display: flex;
    align-items: center;
    gap: 2px;
    height: 10px;
    margin-left: 9px;
    padding-left: 12px;
    border-left: 1px dotted #aaa;
    background: linear-gradient(#bbb, #bbb) 0 5px / 7px 1px no-repeat;
}

.tree li.root {
    margin-left: 0;
    padding-left: 0;
    border: 0;
    background: none;
}

.tree i {
    width: 7px;
    height: 7px;
    border: 1px solid #999;
    font-style: normal;
    line-height: 5px;
    text-align: center;
}

.tree svg {
    width: 10px;
    height: 10px;
}

.tree .sel {
    background: #e4e0d0;
}

.camstatus {
    display: grid;
    grid-template-columns: 2fr 1fr;
    gap: 2px;
    margin-top: 4px;
}

.camstatus span {
    height: 12px;
    border: 1px solid #aaa694;
    border-right-color: #fff;
    border-bottom-color: #fff;
    white-space: nowrap;
}

/* viewport */
.view {
    position: relative;
    flex: 1;
    background: #9e9e9e;
}

.view h2 {
    position: absolute;
    left: 0;
    top: 0;
    margin: 0;
    padding: 0 5px;
    background: #0a50d0;
    color: #fff;
    font-size: 8px;
    line-height: 10px;
}

.view > svg {
    display: block;
    width: 100%;
    height: 100%;
}

.axis {
    font-size: 8px;
    fill: #444;
}

.files {
    width: 37px;
    padding: 1px 4px;
    border-left: 1px solid #fff;
}

.filebody {
    display: flex;
    gap: 3px;
    padding-top: 3px;
}

.fileicons {
    display: flex;
    flex-direction: column;
    width: 12px;
    gap: 1px;
}

.fileicons button {
    height: 15px;
    font-size: 6px;
    font-weight: bold;
    line-height: 5px;
    color: #1c2c9c;
}

.fileicons button:nth-child(3) {
    margin-top: 2px;
    border-top: 1px solid #bbb;
}

.fileicons svg {
    display: block;
    width: 11px;
    height: 10px;
    margin: auto;
}

.vtabs {
    display: flex;
    flex-direction: column;
    gap: 1px;
}

.vtabs button {
    width: 11px;
    padding: 2px 0;
    border: 1px solid #777;
    border-left: 0;
    border-top-color: #fff;
    border-radius: 0 2px 2px 0;
    writing-mode: vertical-rl;
}

.vtabs .active {
    padding-bottom: 11px;
}

/* bottom bars */
.osnap {
    display: grid;
    grid-template-columns: repeat(12, 36px);
    align-items: center;
    height: 14px;
    padding-left: 6px;
    border-bottom: 1px solid #c8c4b2;
}

.osnap button {
    height: 12px;
    border: 1px solid #fff;
    border-right-color: #777;
    border-bottom-color: #777;
    line-height: 9px;
}

.status {
    display: flex;
    align-items: center;
    height: 13px;
    padding-left: 1px;
    gap: 3px;
}

.cell {
    height: 11px;
    border: 1px solid #c0bcaa;
    border-right-color: #fff;
    border-bottom-color: #fff;
    padding: 0 3px;
    line-height: 9px;
}

.cell.plane {
    width: 61px;
    padding: 0;
    white-space: nowrap;
}

.coord {
    width: 52px;
}

.coord.z {
    width: 106px;
}

.cell.layer {
    display: flex;
    align-items: center;
    gap: 1px;
    width: 106px;
    padding: 0;
}

.layer i {
    width: 8px;
    height: 8px;
    background: #000;
}

.cell.set {
    background: #f8f6ee;
    font-weight: bold;
}
```
